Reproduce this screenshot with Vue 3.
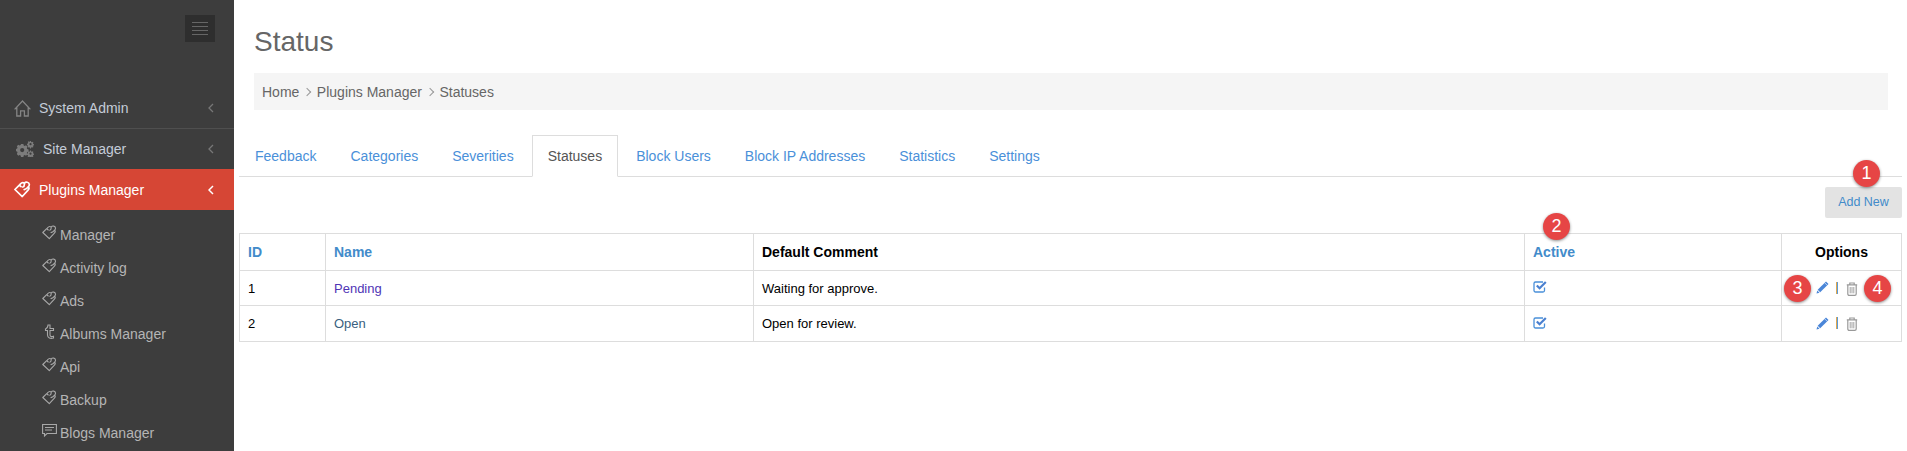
<script setup>
const subItems = [
  { label: 'Manager', icon: 'tag' },
  { label: 'Activity log', icon: 'tag' },
  { label: 'Ads', icon: 'tag' },
  { label: 'Albums Manager', icon: 'tumblr' },
  { label: 'Api', icon: 'tag' },
  { label: 'Backup', icon: 'tag' },
  { label: 'Blogs Manager', icon: 'bubble' },
]
const tabs = ['Feedback', 'Categories', 'Severities', 'Statuses', 'Block Users', 'Block IP Addresses', 'Statistics', 'Settings']
const rows = [
  { id: 1, name: 'Pending', comment: 'Waiting for approve.', visited: true },
  { id: 2, name: 'Open', comment: 'Open for review.', visited: false },
]
</script>

<template>
  <div class="page">
    <aside class="sidebar">
      <div class="toggle-row">
        <button class="toggle"><span></span><span></span><span></span><span></span></button>
      </div>
      <nav class="nav">
        <a class="nav-item bordered">
          <svg class="nav-icon" viewBox="0 0 17 17" fill="none" stroke="#858585" stroke-width="1.3"><path d="M.6 9.400 8.500 1l7.900 8.400M2.800 7.400V16h3.800v-5.200h3.800V16h3.800V7.400"/></svg>
          <span>System Admin</span>
          <svg class="chev" viewBox="0 0 6 10" fill="none" stroke="#777" stroke-width="1.3"><path d="M5 1 1 5l4 4"/></svg>
        </a>
        <a class="nav-item site">
          <svg class="nav-icon gears" viewBox="0 0 18 16" fill="#7c7c7c">
            <path fill-rule="evenodd" d="M5 3h2.400l.3 1.400 1 .5 1.300-.7 1.500 1.500-.7 1.300.4 1 1.400.4v2.200l-1.400.4-.4 1 .7 1.300-1.500 1.500-1.300-.7-1 .4-.3 1.400H5l-.4-1.400-1-.4-1.300.7L.8 12.900l.7-1.300-.4-1L0 10.200V8l1.100-.4.400-1-.7-1.300 1.500-1.500 1.300.7 1-.5zm1.200 4a2.100 2.100 0 1 0 0 4.200 2.100 2.100 0 0 0 0-4.200z"/>
            <path fill-rule="evenodd" d="M14 0h1l.2.900.7.3.8-.4.7.7-.4.800.3.700.9.2v1l-.9.2-.3.700.4.800-.7.700-.8-.4-.7.300-.2.900h-1l-.2-.9-.7-.3-.8.4-.7-.7.4-.8-.3-.7L11 3.700v-1l.9-.2.3-.7-.4-.8.7-.7.8.4.700-.3zm.5 2.100a1.100 1.100 0 1 0 0 2.200 1.100 1.100 0 0 0 0-2.200z"/>
            <path fill-rule="evenodd" d="M14 9.500h1l.2.900.7.3.8-.4.7.7-.4.800.3.700.9.200v1l-.9.200-.3.700.4.800-.7.700-.8-.4-.7.300-.2.900h-1l-.2-.9-.7-.3-.8.4-.7-.7.4-.8-.3-.7-.9-.2v-1l.9-.2.3-.7-.4-.8.7-.7.8.4.700-.3zm.5 2.100a1.100 1.100 0 1 0 0 2.200 1.100 1.100 0 0 0 0-2.200z"/>
          </svg>
          <span>Site Manager</span>
          <svg class="chev" viewBox="0 0 6 10" fill="none" stroke="#777" stroke-width="1.3"><path d="M5 1 1 5l4 4"/></svg>
        </a>
        <a class="nav-item active">
          <svg class="nav-icon" viewBox="0 0 15 15" fill="none" stroke="#fff" stroke-width="1.500" stroke-linejoin="round" stroke-linecap="round"><path d="M7.300 13.700.8 7.500 4.700 3.600 6.200 5M5.500 2.800C6.800 1.300 8.200 1.300 9.200 2 10.300.6 13.300.7 13.500 3c.1 1-.3 1.600-.9 2.100 1 1.100.6 2.200-.2 3L7.300 13.700M7.800 5.300c.9-.3 1.500-1 1.400-2.900M9 7.600c1.300-.2 2.800-1.300 3.600-2.500"/></svg>
          <span>Plugins Manager</span>
          <svg class="chev" viewBox="0 0 6 10" fill="none" stroke="#fff" stroke-width="1.500"><path d="M5 1 1 5l4 4"/></svg>
        </a>
      </nav>
      <ul class="sub">
        <li v-for="item in subItems" :key="item.label">
          <svg v-if="item.icon === 'tag'" class="sub-icon" viewBox="0 0 15 15" fill="none" stroke="#a8a8a8" stroke-width="1.100" stroke-linejoin="round" stroke-linecap="round"><path d="M7.300 13.700.8 7.500 4.700 3.600 6.200 5M5.500 2.800C6.800 1.300 8.200 1.300 9.200 2 10.300.6 13.300.7 13.500 3c.1 1-.3 1.600-.9 2.100 1 1.100.6 2.200-.2 3L7.300 13.700M7.800 5.300c.9-.3 1.500-1 1.400-2.900M9 7.600c1.300-.2 2.800-1.300 3.600-2.500"/></svg>
          <svg v-else-if="item.icon === 'tumblr'" class="sub-icon" viewBox="0 0 15 15" fill="none" stroke="#a8a8a8" stroke-width="1.100"><path d="M3.500 5c1.500-.5 2.300-2 2.500-4h2v3.500h3.500v2H8v4.500c0 1.500 1.500 2 3.500 1.300V14c-3 1-6 0-6-3V6.500h-2z"/></svg>
          <svg v-else class="sub-icon" viewBox="0 0 15 15" fill="none" stroke="#a8a8a8" stroke-width="1.100"><path d="M.6 1.500h13.800v9H5L2.500 13v-2.500H.6zM3 4.500h9M3 7h7"/></svg>
          <span>{{ item.label }}</span>
        </li>
      </ul>
    </aside>

    <main class="main">
      <h1 class="title">Status</h1>
      <div class="crumbs">
        <span>Home</span><i class="sep"></i><span>Plugins Manager</span><i class="sep"></i><span>Statuses</span>
      </div>
      <div class="tabs">
        <a v-for="t in tabs" :key="t" class="tab" :class="{ current: t === 'Statuses' }">{{ t }}</a>
      </div>
      <div class="actions">
        <a class="add-btn">Add New</a>
        <span class="badge b1">1</span>
      </div>
      <div class="table-wrap">
        <span class="badge b2">2</span>
        <span class="badge b3">3</span>
        <span class="badge b4">4</span>
        <table class="grid">
          <colgroup>
            <col class="c-id" /><col class="c-name" /><col class="c-comment" /><col class="c-active" /><col class="c-opt" />
          </colgroup>
          <thead>
            <tr>
              <th class="link">ID</th>
              <th class="link">Name</th>
              <th>Default Comment</th>
              <th class="link">Active</th>
              <th class="center">Options</th>
            </tr>
          </thead>
          <tbody>
            <tr v-for="r in rows" :key="r.id">
              <td>{{ r.id }}</td>
              <td><a :class="r.visited ? 'visited' : 'plain'">{{ r.name }}</a></td>
              <td>{{ r.comment }}</td>
              <td>
                <svg class="check" viewBox="0 0 14 13" fill="none"><path d="M11.500 7.500v3a1.500 1.500 0 0 1-1.500 1.500H2.500A1.500 1.500 0 0 1 1 10.500v-7A1.500 1.500 0 0 1 2.500 2H10" stroke="#4a90d9" stroke-width="1.300"/><path d="m3.800 5.500 2.800 2.800L12.800 2" stroke="#4a80d0" stroke-width="2.200"/></svg>
              </td>
              <td class="center opts">
                <svg class="pencil" viewBox="0 0 13 13"><path d="M10 .5 12.500 3 4.200 11.300 1.700 8.800z" fill="#4a86d8"/><path d="M1.300 9.500 3.500 11.700.5 12.500z" fill="#4a86d8"/><path d="m8.700 1.800 2.500 2.500" stroke="#fff" stroke-width=".6"/></svg>
                <i class="bar"></i>
                <svg class="trash" viewBox="0 0 12 14" fill="none" stroke="#999" stroke-width="1.200"><path d="M.8 2.800h10.400M1.800 2.800v9.200a1.400 1.400 0 0 0 1.400 1.400h5.600a1.400 1.400 0 0 0 1.400-1.400V2.800M3.800 2.600V1h4.400v1.600"/><path d="M4.200 5v6.300M6 5v6.300M7.800 5v6.300" stroke-width=".9"/></svg>
              </td>
            </tr>
          </tbody>
        </table>
      </div>
    </main>
  </div>
</template>

<style>
html, body { margin: 0; background: #fff; overflow: hidden; }
</style>

<style scoped>
.page {
  display: flex;
  width: 1907px;
  height: 451px;
  overflow: hidden;
  font-family: "Liberation Sans", Arial, sans-serif;
  font-size: 14px;
  color: #333;
}
.sidebar {
  width: 234px;
  flex: none;
  background: #3d3d3d;
  color: #b4bcc8;
}
.toggle-row {
  height: 88px;
  box-sizing: border-box;
  padding: 15px 19px 0 0;
  display: flex;
  justify-content: flex-end;
  align-items: flex-start;
}
.toggle {
  width: 30px;
  height: 27px;
  background: #2e2e2e;
  border: 0;
  padding: 7px 7px;
  box-sizing: border-box;
  display: flex;
  flex-direction: column;
  justify-content: space-between;
}
.toggle span { display: block; height: 1px; background: #666; }
.nav-item {
  display: flex;
  align-items: center;
  height: 40px;
  padding: 0 20px 0 14px;
  color: #c4ccd8;
}
.nav-item.bordered { border-bottom: 1px solid #4f4f4f; }
.nav-item.site { padding-left: 16px; }
.nav-item.active { height: 41px; background: #d64635; color: #fff; }
.nav-icon { width: 17px; height: 17px; margin-right: 8px; flex: none; }
.gears { width: 18px; height: 16px; margin-right: 9px; }
.chev { width: 6px; height: 10px; margin-left: auto; }
.sub { list-style: none; margin: 8px 0 0; padding: 0 0 0 42px; color: #b5b5b5; }
.sub li { display: flex; align-items: center; height: 33px; }
.sub-icon { width: 15px; height: 15px; margin-right: 3px; flex: none; position: relative; top: -2px; }

.main { flex: 1; min-width: 0; padding: 0 5px; }
.title {
  margin: 26px 0 0 15px;
  font-size: 28px;
  font-weight: 400;
  line-height: 32px;
  color: #666;
}
.crumbs {
  margin: 15px 14px 0 15px;
  height: 37px;
  padding: 0 8px;
  background: #f5f5f5;
  display: flex;
  align-items: center;
  color: #666;
}
.sep {
  width: 5px;
  height: 5px;
  margin: 0 6.5px 0 5px;
  border-top: 1px solid #999;
  border-right: 1px solid #999;
  transform: rotate(45deg);
}
.tabs {
  margin-top: 25px;
  height: 42px;
  box-sizing: border-box;
  border-bottom: 1px solid #ddd;
  display: flex;
  align-items: flex-start;
}
.tab {
  height: 42px;
  box-sizing: border-box;
  padding: 10px 15px 0;
  margin-right: 2px;
  border: 1px solid transparent;
  line-height: 20px;
  color: #4a90d9;
}
.tab.current {
  border-color: #ddd;
  border-bottom-color: #fff;
  color: #555;
  background: #fff;
}
.actions {
  position: relative;
  display: flex;
  justify-content: flex-end;
  padding: 10px 0 15px;
  height: 31px;
}
.add-btn {
  width: 77px;
  height: 31px;
  background: #e3e3e3;
  border-radius: 2px;
  text-align: center;
  line-height: 31px;
  font-size: 12.5px;
  color: #428bca;
}
.table-wrap { position: relative; }
.grid {
  width: 1662px;
  table-layout: fixed;
  border-collapse: collapse;
  color: #000;
  font-size: 13px;
}
.c-id { width: 86px; }
.c-name { width: 428px; }
.c-comment { width: 771px; }
.c-active { width: 257px; }
.c-opt { width: 120px; }
.grid th, .grid td {
  border: 1px solid #ddd;
  padding: 0 8px;
  text-align: left;
}
.grid th { height: 36px; font-size: 14px; font-weight: 700; }
.grid td { height: 34px; }
.grid tbody tr:last-child td { height: 35px; }
.grid th.link { color: #428bca; }
.grid th.center, .grid td.center { text-align: center; }
.visited { color: #4f35b5; }
.plain { color: #3a5f80; }
.check { width: 14px; height: 13px; position: relative; top: 0; display: inline-block; }
.grid td.opts { white-space: nowrap; padding-right: 17px; }
.pencil { width: 13px; height: 13px; vertical-align: middle; position: relative; top: -1px; }
.bar { display: inline-block; width: 2px; height: 12px; background: linear-gradient(90deg, #e0a850 35%, #5a9ad8 35%); margin: 0 8px 0 7px; vertical-align: middle; position: relative; top: -1px; }
.trash { width: 12px; height: 14px; vertical-align: middle; }
.badge {
  position: absolute;
  width: 27px;
  height: 27px;
  border-radius: 50%;
  background: #e64545;
  box-shadow: 0 1px 3px rgba(0, 0, 0, .45);
  color: #fff;
  font-size: 18px;
  line-height: 27px;
  text-align: center;
  z-index: 2;
}
.b1 { right: 22px; top: -17px; }
.b2 { left: 1304px; top: -20px; }
.b3 { left: 1545px; top: 42px; }
.b4 { left: 1625px; top: 42px; }
</style>
